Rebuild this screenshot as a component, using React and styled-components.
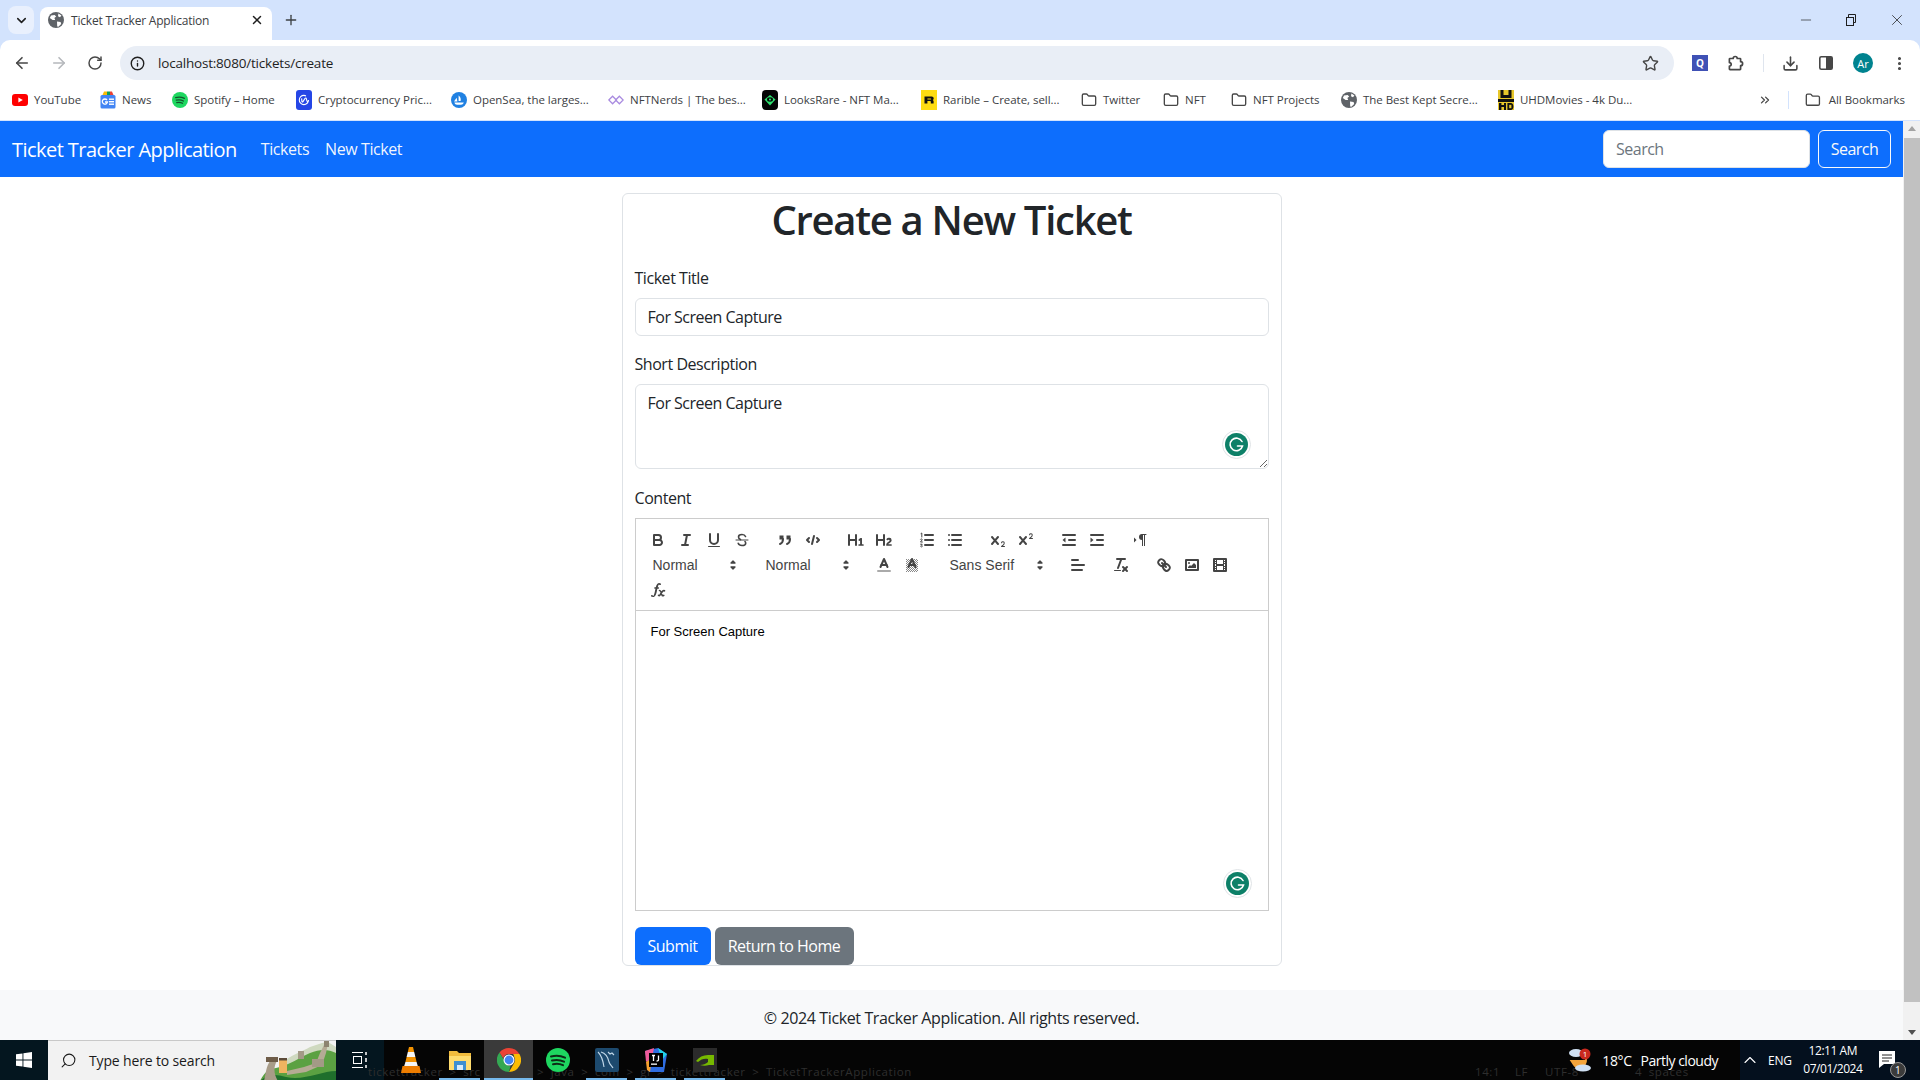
import styled, { createGlobalStyle } from 'styled-components'
import {
  ArrowLeft, ArrowRight, RotateCw, Star, Info, Download, MoreVertical,
  Plus, X, ChevronDown, ChevronUp, Folder, Minus, ChevronsRight, Search,
} from 'lucide-react'

const UI_FONT = '"Open Sans", "Liberation Sans", sans-serif'

const GlobalStyle = createGlobalStyle`
  * { box-sizing: border-box; }
  html, body { margin: 0; padding: 0; height: 100%; overflow: hidden; }
  body { font-family: ${UI_FONT}; color: #212529; background: #fff; }
`

/* ---------- small logos ---------- */

const YouTubeLogo = () => (
  <svg width="16" height="16" viewBox="0 0 16 16">
    <rect x="0" y="2" width="16" height="12" rx="3" fill="#f00" />
    <path d="M6.4 5.4 10.8 8 6.4 10.6Z" fill="#fff" />
  </svg>
)
const NewsLogo = () => (
  <svg width="16" height="20" viewBox="0 0 16 20">
    <path d="M2.500 5 4 1.500h3V5Z" fill="#fbbc04" />
    <path d="M7 5V1.500h3V5Z" fill="#0f9d58" />
    <path d="M10 1.500h2L13.500 5H10Z" fill="#ea4335" />
    <rect x="0.500" y="5" width="15" height="13.500" rx="1.500" fill="#4285f4" />
    <rect x="9" y="8.500" width="5" height="1.400" fill="#fff" />
    <rect x="9" y="11" width="5" height="1.400" fill="#fff" />
    <rect x="9" y="13.500" width="5" height="1.400" fill="#fff" />
    <path d="M7 10a2.600 2.600 0 1 0 .5 2H5" fill="none" stroke="#fff" strokeWidth="1.300" />
  </svg>
)
const SpotifyLogo = () => (
  <svg width="16" height="16" viewBox="0 0 16 16">
    <circle cx="8" cy="8" r="8" fill="#1ed760" />
    <path d="M3.600 5.600C6.400 4.800 9.800 5 12.400 6.400M4.200 8.200c2.400-.6 5.200-.4 7.200.9M4.700 10.600c2-.5 4.200-.3 5.900.7" fill="none" stroke="#14532d" strokeWidth="1.200" strokeLinecap="round" />
  </svg>
)
const CoinLogo = () => (
  <svg width="16" height="20" viewBox="0 0 16 20">
    <rect width="16" height="20" rx="3" fill="#2546e6" />
    <path d="M12.600 11.400c-.7.6-1.600.3-1.800-.7L10.300 8.600c-.1-.7-.8-.9-1.200-.3L7 11.600c-.4.5-1 .3-1.100-.3L5.600 8.400M12.500 10A4.600 4.600 0 1 1 8 5.400 4.600 4.600 0 0 1 10 5.900" fill="none" stroke="#fff" strokeWidth="1.100" />
  </svg>
)
const OpenSeaLogo = () => (
  <svg width="16" height="16" viewBox="0 0 16 16">
    <circle cx="8" cy="8" r="8" fill="#2081e2" />
    <path d="M3 9.600 5.600 5.800l.8 3.800ZM7.600 3.600c1.600 1.200 2.600 3 2 5.400H7.600ZM3.400 10.600h9.400c-.6 1.600-1.600 2.200-2.800 2.200H6c-1.200 0-2.200-.8-2.600-2.200Z" fill="#fff" />
  </svg>
)
const NerdsLogo = () => (
  <svg width="16" height="16" viewBox="0 0 16 16" fill="none" stroke="#a98be0" strokeWidth="1.300">
    <path d="M.8 8 4.600 4.200 8.400 8 4.600 11.800Z" />
    <path d="M7.600 8 11.400 4.200 15.200 8 11.400 11.800Z" />
  </svg>
)
const LooksRareLogo = () => (
  <svg width="16" height="20" viewBox="0 0 16 20">
    <rect width="16" height="20" rx="4" fill="#050505" />
    <path d="M8 15.500 2.500 9.500 8 5l5.500 4.500Z" fill="#2de370" />
    <ellipse cx="8" cy="9.500" rx="3" ry="2.200" fill="#050505" />
    <circle cx="8" cy="9.500" r="1.100" fill="#2de370" />
  </svg>
)
const RaribleLogo = () => (
  <svg width="16" height="20" viewBox="0 0 16 20">
    <rect width="16" height="20" fill="#fedc12" />
    <path d="M3.500 6.500h7.200c1.200 0 2 .8 2 2 0 .8-.4 1.300-1 1.600.6.2.9.7.9 1.300v2.100H9.800v-1.800c0-.4-.2-.6-.6-.6H6.400v2.400H3.500Zm2.900 2v1.100h3.200c.4 0 .6-.2.6-.55s-.2-.55-.6-.55Z" fill="#111" />
  </svg>
)
const GlobeLogo = () => (
  <svg width="16" height="16" viewBox="0 0 16 16">
    <circle cx="8" cy="8" r="8" fill="#5f6368" />
    <path d="M3 3.400 6.600 3l1.600 1.400L6.400 6 7.200 8H4.600L1.800 6ZM9 9.400l3.600.6.6 2-2.800 2.800-1.200-.4ZM10.400 1.400l3 2-1.400 1.800-2-1Z" fill="#fff" />
  </svg>
)
const UhdLogo = () => (
  <svg width="16" height="20" viewBox="0 0 16 20">
    <rect width="16" height="20" fill="#e7c72b" />
    <rect width="16" height="3" y="9" fill="#111" />
    <path d="M2.500 0h3v5h5V0h3v8h-11ZM1 13h2.400v2H6v-2h2v7H6v-3H3.400v3H1ZM9.400 13h3.400c1.600 0 2.600 1.400 2.600 3.500S14.400 20 12.800 20H9.400Z" fill="#111" />
    <rect x="11.200" y="14.800" width="2.200" height="3.400" fill="#e7c72b" />
  </svg>
)
const WindowsLogo = () => (
  <svg width="16" height="16" viewBox="0 0 16 16" fill="#fff">
    <path d="M0 2.300 6.500 1.400V7.500H0ZM7.400 1.300 16 0V7.500H7.400ZM0 8.400H6.500V14.600L0 13.700ZM7.400 8.400H16V16L7.400 14.700Z" />
  </svg>
)
const GrammarlyBadge = () => (
  <svg width="29" height="29" viewBox="0 0 29 29">
    <circle cx="14.500" cy="14.500" r="14" fill="#fff" stroke="#dfe3e6" />
    <circle cx="14.500" cy="14.500" r="11.500" fill="#0d8068" />
    <path d="M20 11.500A6.300 6.300 0 1 0 20.500 16H15.500" fill="none" stroke="#fff" strokeWidth="1.600" strokeLinecap="round" />
  </svg>
)

/* ---------- quill toolbar icons ---------- */

const QuillSvg = styled.svg.attrs({ viewBox: '0 0 18 18', width: 18, height: 18 })`
  fill: none;
  stroke: #444;
  stroke-width: 2;
  stroke-linecap: round;
  stroke-linejoin: round;
  .thin { stroke-width: 1; }
  .mid { stroke-width: 1.6; }
  .fill { fill: #444; stroke: none; }
`

const quillIcons = {
  bold: <><path d="M5,4H9.500A2.500,2.500,0,0,1,12,6.500v0A2.500,2.500,0,0,1,9.500,9H5V4Z" /><path d="M5,9h5.500A2.500,2.500,0,0,1,13,11.500v0A2.500,2.500,0,0,1,10.500,14H5V9Z" /></>,
  italic: <><line x1="7" x2="13" y1="4" y2="4" /><line x1="5" x2="11" y1="14" y2="14" /><line x1="8" x2="10" y1="14" y2="4" /></>,
  underline: <><path d="M5,3V9a4,4,0,0,0,4,4H9a4,4,0,0,0,4-4V3" /><rect className="fill" x="3" y="15" width="12" height="1" rx=".5" /></>,
  strike: <><line className="thin" x1="3" x2="15" y1="9" y2="9" /><path className="mid" d="M12.500 5.500C12 4.200 10.800 3.500 9 3.500 7 3.500 5.500 4.500 5.500 6c0 1.200.8 2.100 2 2.600M12 10.500c.5.500.7 1.100.7 1.700 0 1.400-1.600 2.300-3.700 2.300-2 0-3.300-.8-3.800-2.200" /></>,
  blockquote: <><rect className="fill" x="3.500" y="4.500" width="4" height="4" /><rect className="fill" x="10.500" y="4.500" width="4" height="4" /><path d="M7,8c0,4-3,5-3,5" /><path d="M14,8c0,4-3,5-3,5" /></>,
  code: <><polyline points="5 7 3 9 5 11" /><polyline points="13 7 15 9 13 11" /><line x1="10" x2="8" y1="5" y2="13" /></>,
  h1: <path className="fill" d="M10,4V14a1,1,0,0,1-2,0V10H3v4a1,1,0,0,1-2,0V4A1,1,0,0,1,3,4V8H8V4a1,1,0,0,1,2,0Zm6.068,9.209H14.990V7.599a.541.541,0,0,0-.605-.605h-.627a1.011,1.011,0,0,0-.748.297L11.645,8.566a.543.543,0,0,0-.022.858l.286.308a.539.539,0,0,0,.847.033l.099-.088a1.214,1.214,0,0,0,.242-.353h.022s-.011.309-.011.605V13.209H12.041a.541.541,0,0,0-.605.605v.439a.541.541,0,0,0,.605.605h4.027a.541.541,0,0,0,.605-.605v-.439A.541.541,0,0,0,16.068,13.209Z" />,
  h2: <path className="fill" d="M16.740,13.814v.439a.541.541,0,0,1-.605.605H11.855a.584.584,0,0,1-.649-.605V14.013c0-2.905,3.399-3.422,3.399-4.555a.777.777,0,0,0-.847-.781,1.177,1.177,0,0,0-.836.385c-.275.264-.561.374-.858.132l-.429-.341c-.308-.242-.385-.518-.154-.814a2.972,2.972,0,0,1,2.454-1.177,2.454,2.454,0,0,1,2.684,2.409c0,2.453-3.179,2.927-3.278,3.938h2.794A.541.541,0,0,1,16.740,13.814ZM9,3A1,1,0,0,0,8,4V8H3V4A1,1,0,0,0,1,4V14a1,1,0,0,0,2,0V10H8v4a1,1,0,0,0,2,0V4A1,1,0,0,0,9,3Z" />,
  ol: <><line x1="7" x2="15" y1="4" y2="4" /><line x1="7" x2="15" y1="9" y2="9" /><line x1="7" x2="15" y1="14" y2="14" /><path className="thin" d="M3 2.500 3.800 2V6M2.500 8.300C3 7.600 4.300 7.800 4.200 8.800 4.100 9.600 2.600 10.200 2.500 11H4.400M2.600 13.200H4.200L3.300 14.300C4.300 14.300 4.500 15 4.200 15.500 3.900 16 3 16 2.600 15.500" /></>,
  ul: <><line x1="6" x2="15" y1="4" y2="4" /><line x1="6" x2="15" y1="9" y2="9" /><line x1="6" x2="15" y1="14" y2="14" /><line x1="3" x2="3" y1="4" y2="4" /><line x1="3" x2="3" y1="9" y2="9" /><line x1="3" x2="3" y1="14" y2="14" /></>,
  sub: <><path className="fill" d="M15.500,15H13.861a3.858,3.858,0,0,0,1.914-2.975,1.805,1.805,0,0,0-1.600-1.751A1.921,1.921,0,0,0,12.021,11.700a.5.5,0,1,0,.957.291h0a.914.914,0,0,1,1.053-.725.81.81,0,0,1,.744.762c0,1.076-1.170,1.870-1.940,2.431A1.456,1.456,0,0,0,12,15.500a.5.5,0,0,0,.5.5h3A.5.5,0,0,0,15.500,15Z" /><path className="fill" d="M9.650,5.241a1,1,0,0,0-1.409.108L6,7.964,3.759,5.349A1,1,0,0,0,2.241,6.649L4.684,9.500,2.241,12.350A1,1,0,0,0,3.759,13.650L6,11.036,8.241,13.650a1,1,0,1,0,1.518-1.300L7.316,9.500,9.759,6.651A1,1,0,0,0,9.650,5.241Z" /></>,
  sup: <><path className="fill" d="M15.500,7H13.861a4.015,4.015,0,0,0,1.914-2.975,1.805,1.805,0,0,0-1.600-1.751A1.922,1.922,0,0,0,12.021,3.700a.5.5,0,1,0,.957.291.917.917,0,0,1,1.053-.725.81.81,0,0,1,.744.762c0,1.077-1.164,1.925-1.934,2.486A1.423,1.423,0,0,0,12,7.500a.5.5,0,0,0,.5.5h3A.5.5,0,0,0,15.500,7Z" /><path className="fill" d="M9.651,5.241a1,1,0,0,0-1.410.108L6,7.964,3.759,5.349a1,1,0,1,0-1.519,1.300L4.683,9.500,2.241,12.350a1,1,0,1,0,1.519,1.300L6,11.036l2.241,2.614a1,1,0,0,0,1.519-1.300L7.317,9.500,9.759,6.651A1,1,0,0,0,9.651,5.241Z" /></>,
  outdent: <><line x1="3" x2="15" y1="14" y2="14" /><line x1="3" x2="15" y1="4" y2="4" /><line x1="9" x2="15" y1="9" y2="9" /><polygon className="fill" points="5.500 6.500 5.500 11.500 2.500 9" /></>,
  indent: <><line x1="3" x2="15" y1="14" y2="14" /><line x1="3" x2="15" y1="4" y2="4" /><line x1="9" x2="15" y1="9" y2="9" /><polygon className="fill" points="2.500 6.500 2.500 11.500 5.500 9" /></>,
  direction: <><polygon className="fill" points="3 11.500 5.500 9 3 6.500" /><path className="fill" d="M11,3a3,3,0,0,0,0,6h1V3Z" /><line className="thin" x1="11" x2="15" y1="3.500" y2="3.500" /><rect className="fill" x="11" y="4" width="1" height="11" /><rect className="fill" x="13" y="4" width="1" height="11" /></>,
  color: <><line x1="3" x2="15" y1="15" y2="15" stroke="#aaa" /><polyline points="5.500 11 9 3 12.500 11" /><line x1="11.630" x2="6.380" y1="9" y2="9" /></>,
  background: <><pattern id="dither" width="2" height="2" patternUnits="userSpaceOnUse"><rect width="1" height="1" fill="#888" stroke="none" /><rect x="1" y="1" width="1" height="1" fill="#888" stroke="none" /></pattern><rect x="3" y="3" width="12" height="13" fill="url(#dither)" stroke="none" /><polyline points="5.500 11 9 3 12.500 11" /><line x1="11.630" x2="6.380" y1="9" y2="9" /></>,
  align: <><line x1="3" x2="15" y1="9" y2="9" /><line x1="3" x2="13" y1="14" y2="14" /><line x1="3" x2="9" y1="4" y2="4" /></>,
  clean: <><line x1="5" x2="13" y1="3" y2="3" /><line x1="6" x2="9.350" y1="12" y2="3" /><line x1="11" x2="15" y1="11" y2="15" /><line x1="15" x2="11" y1="11" y2="15" /><rect className="fill" x="2" y="14" width="7" height="1" rx=".5" /></>,
  link: <><line x1="7" x2="11" y1="7" y2="11" /><path d="M8.900,4.577a3.476,3.476,0,0,1,.36,4.679A3.476,3.476,0,0,1,4.577,8.900C3.185,7.500,2.035,6.400,4.217,4.217S7.500,3.185,8.900,4.577Z" /><path d="M13.423,9.100a3.476,3.476,0,0,0-4.679-.36,3.476,3.476,0,0,0,.36,4.679c1.392,1.392,2.500,2.542,4.679.36S14.815,10.500,13.423,9.100Z" /></>,
  image: <><rect x="3" y="4" width="12" height="10" /><circle className="fill" cx="6" cy="7" r="1" /><polygon className="fill" points="5 12 5 11 7 9 8 10 11 7 13 9 13 12" /></>,
  video: <><rect x="3" y="3" width="12" height="12" /><rect className="fill" x="5" y="3" width="1" height="12" /><rect className="fill" x="12" y="3" width="1" height="12" /><rect className="fill" x="5" y="8" width="8" height="2" /><rect className="fill" x="3" y="5" width="3" height="1" /><rect className="fill" x="3" y="7" width="3" height="1" /><rect className="fill" x="3" y="10" width="3" height="1" /><rect className="fill" x="3" y="12" width="3" height="1" /><rect className="fill" x="12" y="5" width="3" height="1" /><rect className="fill" x="12" y="7" width="3" height="1" /><rect className="fill" x="12" y="10" width="3" height="1" /><rect className="fill" x="12" y="12" width="3" height="1" /></>,
  formula: <><path className="fill" d="M11.759,2.482a2.561,2.561,0,0,0-3.530.607A7.656,7.656,0,0,0,6.800,6.200C6.109,9.188,5.275,14.677,4.150,14.927a1.545,1.545,0,0,0-1.300-.933A.922.922,0,0,0,2,15.036S1.954,16,4.119,16s3.091-2.691,3.700-5.553c.177-.826.36-1.726.554-2.600L8.775,6.200c.381-1.421.807-2.521,1.306-2.676a1.014,1.014,0,0,0,1.020.56A.966.966,0,0,0,11.759,2.482Z" /><rect className="fill" x="5.150" y="6.200" width="5" height="1.600" rx=".8" /><path className="mid" d="M10.500 9.500c1 0 1.300.6 1.700 2l.8 2.500c.3.900.9 1 1.800.4M15.500 9.800c-1-.6-1.800 0-2.700 1.400L11 14c-.5.700-1 .8-1.500.3" /></>,
}

const QuillIcon = ({ name }) => <QuillSvg>{quillIcons[name]}</QuillSvg>

const PickerArrows = () => (
  <QuillSvg>
    <polygon points="7 11 9 13 11 11" stroke="#444" strokeWidth="1.300" fill="#444" />
    <polygon points="7 7 9 5 11 7" stroke="#444" strokeWidth="1.300" fill="#444" />
  </QuillSvg>
)

/* ---------- browser chrome ---------- */

const Screen = styled.div`
  width: 1920px;
  height: 1080px;
  background: #d3e3fd;
  display: flex;
  flex-direction: column;
  overflow: hidden;
`
const TabStrip = styled.div`
  height: 40px;
  display: flex;
  align-items: flex-end;
  padding-left: 8px;
  flex: none;
`
const TabListButton = styled.div`
  width: 26px;
  height: 28px;
  margin-bottom: 6px;
  border-radius: 8px;
  background: #e9f0fd;
  color: #1f1f1f;
  display: flex;
  align-items: center;
  justify-content: center;
`
const ActiveTab = styled.div`
  width: 232px;
  height: 33px;
  margin-left: 6px;
  background: #fff;
  border-radius: 8px 8px 0 0;
  display: flex;
  align-items: center;
  padding: 0 8px 7px;
  gap: 7px;
`
const TabTitle = styled.span`
  flex: 1;
  font-size: 12px;
  color: #3c4043;
  letter-spacing: -0.2px;
`
const NewTab = styled.div`
  margin: 0 0 9px 11px;
  width: 16px;
  height: 22px;
  display: flex;
  align-items: center;
  color: #3c4043;
`
const WindowControls = styled.div`
  margin-left: auto;
  align-self: stretch;
  display: flex;
  align-items: center;
  gap: 29px;
  padding-right: 14px;
  color: #1f1f1f;
`
const RestoreIcon = () => (
  <svg width="16" height="16" viewBox="0 0 16 16" fill="none" stroke="#1f1f1f">
    <rect x="3.500" y="5.500" width="7" height="8" />
    <path d="M5.500 5.500v-3h7v8h-2" />
  </svg>
)

const Toolbar = styled.div`
  height: 41px;
  background: #fff;
  border-radius: 10px 10px 0 0;
  display: flex;
  align-items: flex-start;
  padding: 6px 0 0 13px;
  flex: none;
`
const NavIcons = styled.div`
  width: 107px;
  height: 34px;
  display: flex;
  align-items: center;
  gap: 19px;
  color: #474747;
  flex: none;
`
const AddressBar = styled.div`
  width: 1554px;
  height: 34px;
  flex: none;
  border-radius: 17px;
  background: #e9eef6;
  display: flex;
  align-items: center;
  padding: 0 0 0 10px;
  gap: 13px;
`
const Url = styled.span`
  flex: 1;
  font-size: 13.5px;
  color: #1f1f1f;
  letter-spacing: -0.2px;
`
const StarWrap = styled.div`
  display: flex;
  margin-right: 15px;
  color: #474747;
`
const ToolbarIcons = styled.div`
  display: flex;
  align-items: center;
  height: 34px;
  margin-left: 18px;
  color: #474747;
  flex: none;
`
const ExtensionBadge = styled.div`
  width: 16px;
  height: 16px;
  background: #3f51b5;
  color: #fff;
  font-size: 10px;
  font-weight: 700;
  display: flex;
  align-items: center;
  justify-content: center;
`
const ToolbarSlot = styled.div`
  width: ${p => p.$w}px;
  display: flex;
  justify-content: center;
`
const ToolbarDivider = styled.div`
  width: 1px;
  height: 18px;
  background: #dfe5ee;
  margin: 0 17px 0 1px;
`
const Avatar = styled.div`
  width: 20px;
  height: 20px;
  margin-right: 4px;
  border-radius: 50%;
  background: #00838f;
  color: #fff;
  font-size: 11px;
  display: flex;
  align-items: center;
  justify-content: center;
`
const PuzzleIcon = () => (
  <svg width="18" height="18" viewBox="0 0 18 18" fill="none" stroke="#474747" strokeWidth="1.700" strokeLinejoin="round">
    <path d="M4 4.500h3.200a2 2 0 1 1 4 0H14a.6.6 0 0 1 .6.6V7.700a2 2 0 1 1 0 4V15a.6.6 0 0 1-.6.6H4a.6.6 0 0 1-.6-.6V12.200a1.800 1.800 0 0 0 0-3.600V5.100A.6.6 0 0 1 4 4.500Z" />
  </svg>
)
const SidePanelIcon = () => (
  <svg width="16" height="16" viewBox="0 0 16 16">
    <rect x="1.800" y="1.800" width="12.400" height="12.400" rx="1.500" fill="none" stroke="#474747" strokeWidth="1.600" />
    <rect x="8" y="1.800" width="6.200" height="12.400" fill="#474747" />
  </svg>
)

const BookmarkBar = styled.div`
  height: 40px;
  background: #fff;
  border-bottom: 1px solid #d3e3fd;
  display: flex;
  align-items: center;
  padding: 0 0 2px 12px;
  flex: none;
`
const Bookmark = styled.div`
  display: flex;
  align-items: center;
  gap: ${p => (p.$last ? 8 : 6)}px;
  margin-right: ${p => (p.$last ? 0 : 12)}px;
  width: ${p => p.$w}px;
  flex: none;
`
const BookmarkLabel = styled.span`
  font-size: 11.5px;
  color: #3c4043;
  white-space: nowrap;
  letter-spacing: -0.03px;
`
const BookmarkEnd = styled.div`
  margin-left: auto;
  display: flex;
  align-items: center;
  padding-right: 15px;
  color: #474747;
`
const BookmarkDivider = styled.div`
  width: 1px;
  height: 18px;
  background: #d3e3fd;
  margin: 0 16px;
`

/* ---------- page ---------- */

const Viewport = styled.div`
  flex: 1;
  min-height: 0;
  display: flex;
`
const Page = styled.div`
  flex: 1;
  min-width: 0;
  background: #fff;
  display: flex;
  flex-direction: column;
`
const Navbar = styled.nav`
  height: 56px;
  background: #0d6efd;
  display: flex;
  align-items: center;
  padding: 0 12px;
  flex: none;
`
const Brand = styled.a`
  font-size: 20px;
  color: #fff;
  margin-right: 24px;
  letter-spacing: -0.55px;
`
const NavLink = styled.a`
  font-size: 16px;
  color: rgba(255, 255, 255, 0.95);
  margin-right: 16px;
  letter-spacing: -0.42px;
`
const NavSearch = styled.form`
  margin-left: auto;
  display: flex;
  gap: 8px;
`
const SearchInput = styled.input`
  width: 207px;
  height: 38px;
  border: 1px solid #dee2e6;
  border-radius: 6px;
  padding: 0 12px;
  font: 16px ${UI_FONT};
  letter-spacing: -0.5px;
  &::placeholder { color: #6c757d; opacity: 1; }
`
const OutlineButton = styled.button`
  width: 73px;
  height: 38px;
  border: 1px solid #f8f9fa;
  border-radius: 6px;
  background: transparent;
  color: #f8f9fa;
  font: 16px ${UI_FONT};
  letter-spacing: -0.5px;
  padding: 0;
`
const Main = styled.main`
  flex: 1;
  min-height: 0;
  padding-top: 16px;
  display: flex;
  justify-content: center;
`
const Card = styled.form`
  width: 660px;
  height: 773px;
  border: 1px solid #dee2e6;
  border-radius: 6px;
  padding: 0 12px;
`
const Heading = styled.h1`
  font-size: 40px;
  line-height: 48px;
  font-weight: 600;
  text-align: center;
  margin: 2px 0 22px;
  color: #212529;
  letter-spacing: -1.28px;
`
const Field = styled.div`
  margin-bottom: ${p => p.$mb || 16}px;
`
const Label = styled.label`
  display: block;
  font-size: 16px;
  line-height: 24px;
  margin-bottom: 8px;
  letter-spacing: -0.45px;
`
const TextInput = styled.input`
  display: block;
  width: 100%;
  height: 38px;
  border: 1px solid #dee2e6;
  border-radius: 6px;
  padding: 0 12px;
  font: 16px ${UI_FONT};
  letter-spacing: -0.5px;
  color: #212529;
`
const DescriptionBox = styled.div`
  position: relative;
  height: 85px;
`
const TextArea = styled.textarea`
  display: block;
  width: 100%;
  height: 85px;
  border: 1px solid #dee2e6;
  border-radius: 6px;
  padding: 6px 12px;
  font: 16px/24px ${UI_FONT};
  letter-spacing: -0.5px;
  color: #212529;
`
const BadgeSlot = styled.div`
  position: absolute;
  right: ${p => p.$right}px;
  bottom: ${p => p.$bottom}px;
  height: 29px;
`
const EditorToolbar = styled.div`
  border: 1px solid #ccc;
  padding: 8px;
  font-family: Helvetica, "Liberation Sans", Arial, sans-serif;
`
const ToolRow = styled.div`
  height: 25px;
  display: flex;
  align-items: center;
`
const ToolGroup = styled.span`
  display: flex;
  margin-right: 15px;
`
const ToolButton = styled.span`
  width: 28px;
  height: 24px;
  padding: 3px 5px;
  display: block;
`
const Picker = styled.span`
  width: ${p => p.$w}px;
  height: 24px;
  display: flex;
  align-items: center;
  justify-content: space-between;
  padding: 0 2px 0 9px;
  font-size: 14px;
  color: #444;
  svg { margin-right: -2px; }
`
const EditorBody = styled.div`
  position: relative;
  height: 300px;
  border: 1px solid #ccc;
  border-top: 0;
  padding: 12px 15px;
  font: 13px/1.42 Helvetica, "Liberation Sans", Arial, sans-serif;
  color: #000;
`
const Actions = styled.div`
  display: flex;
  gap: 4px;
`
const FormButton = styled.button`
  height: 38px;
  padding: 0;
  width: ${p => p.$w}px;
  border: 0;
  border-radius: 6px;
  background: ${p => p.$bg};
  color: #fff;
  font: 16px ${UI_FONT};
  letter-spacing: -0.5px;
`
const Footer = styled.footer`
  height: 50px;
  flex: none;
  background: #f8f9fa;
  text-align: center;
  font-size: 16px;
  line-height: 56px;
  color: #212529;
  letter-spacing: -0.38px;
`
const Scrollbar = styled.div`
  width: 17px;
  background: #f1f1f1;
  display: flex;
  flex-direction: column;
  align-items: center;
  justify-content: space-between;
  padding: 5px 0;
  position: relative;
`
const ScrollThumb = styled.div`
  position: absolute;
  left: 1px;
  right: 0;
  top: 17px;
  bottom: 38px;
  background: #c1c1c1;
`
const ScrollArrow = styled.div`
  width: 0;
  height: 0;
  border-left: 4px solid transparent;
  border-right: 4px solid transparent;
  ${p => (p.$down ? 'border-top: 5px solid #505050;' : 'border-bottom: 5px solid #a3a3a3;')}
`

/* ---------- taskbar ---------- */

const Taskbar = styled.div`
  position: relative;
  height: 40px;
  flex: none;
  background: #050505;
  display: flex;
  align-items: stretch;
  color: #fff;
`
const StartButton = styled.div`
  width: 48px;
  background: #04161f;
  display: flex;
  align-items: center;
  justify-content: center;
`
const SearchBox = styled.div`
  width: 288px;
  background: #f2f2f2;
  border-top: 1px solid #c8c8c8;
  display: flex;
  align-items: center;
  padding-left: 12px;
  gap: 12px;
  color: #1a1a1a;
  font-size: 14px;
  letter-spacing: -0.15px;
  overflow: hidden;
  position: relative;
`
const SearchGlass = styled(Search)`
  transform: scaleX(-1);
  flex: none;
`
const SearchArt = styled.svg`
  position: absolute;
  right: 0;
  top: 0;
`
const TaskView = styled.div`
  width: 48px;
  background: #04161f;
  display: flex;
  align-items: center;
  justify-content: center;
`
const TaskApp = styled.div`
  width: 49px;
  margin-left: ${p => p.$ml || 0}px;
  background: ${p => (p.$active ? '#3a3a3a' : 'transparent')};
  display: flex;
  align-items: center;
  justify-content: center;
  position: relative;
  &::after {
    content: '';
    display: ${p => (p.$running ? 'block' : 'none')};
    position: absolute;
    left: ${p => (p.$active ? 0 : 4)}px;
    right: ${p => (p.$active ? 0 : 4)}px;
    bottom: 0;
    height: 2px;
    background: #76b9ed;
  }
`
const Ghost = styled.span`
  position: absolute;
  top: 24px;
  left: ${p => p.$left}px;
  font-size: 11.5px;
  letter-spacing: 0.6px;
  word-spacing: 3px;
  color: #2e2e2e;
  white-space: nowrap;
`
const Tray = styled.div`
  margin-left: auto;
  display: flex;
  align-items: center;
  position: relative;
`
const Weather = styled.div`
  display: flex;
  align-items: center;
  font-size: 14px;
  gap: 9px;
  padding-right: 22px;
`
const WeatherTemp = styled.span`
  letter-spacing: -0.4px;
`
const WeatherText = styled.span`
  letter-spacing: -0.5px;
`
const TrayRight = styled.div`
  width: 180px;
  align-self: stretch;
  background: #04101e;
  display: flex;
  align-items: center;
  font-size: 12px;
`
const TrayLang = styled.span`
  margin-left: 8px;
  letter-spacing: -0.2px;
`
const Clock = styled.div`
  width: 62px;
  margin-left: 10px;
  text-align: center;
  line-height: 18px;
  font-size: 12px;
  letter-spacing: -0.45px;
  white-space: nowrap;
`
const NotifyWrap = styled.div`
  position: relative;
  width: 24px;
  height: 24px;
  margin-left: 12px;
`
const NotifyCount = styled.span`
  position: absolute;
  right: -6px;
  bottom: -6px;
  width: 16px;
  height: 16px;
  border-radius: 50%;
  background: #3b3b3b;
  border: 1px solid #999;
  font-size: 10px;
  line-height: 14px;
  text-align: center;
`

const bookmarks = [
  { label: 'YouTube', w: 76, icon: <YouTubeLogo /> },
  { label: 'News', w: 60, icon: <NewsLogo /> },
  { label: 'Spotify – Home', w: 112, icon: <SpotifyLogo /> },
  { label: 'Cryptocurrency Pric...', w: 143, icon: <CoinLogo /> },
  { label: 'OpenSea, the larges...', w: 145, icon: <OpenSeaLogo /> },
  { label: 'NFTNerds | The bes...', w: 142, icon: <NerdsLogo /> },
  { label: 'LooksRare - NFT Ma...', w: 147, icon: <LooksRareLogo /> },
  { label: 'Rarible – Create, sell...', w: 148, icon: <RaribleLogo /> },
  { label: 'Twitter', w: 70, icon: <Folder size={16} color="#474747" /> },
  { label: 'NFT', w: 56, icon: <Folder size={16} color="#474747" /> },
  { label: 'NFT Projects', w: 98, icon: <Folder size={16} color="#474747" /> },
  { label: 'The Best Kept Secre...', w: 145, icon: <GlobeLogo /> },
  { label: 'UHDMovies - 4k Du...', w: 142, icon: <UhdLogo /> },
]

const toolRows = [
  [['bold', 'italic', 'underline', 'strike'], ['blockquote', 'code'], ['h1', 'h2'], ['ol', 'ul'], ['sub', 'sup'], ['outdent', 'indent'], ['direction']],
  [{ picker: 'Normal', w: 98 }, { picker: 'Normal', w: 98 }, ['color', 'background'], { picker: 'Sans Serif', w: 108 }, ['align'], ['clean'], ['link', 'image', 'video']],
  [['formula']],
]

const ghostTexts = [
  { left: 368, text: 'tickettracker > src > main > java > com > gl > tickettracker > TicketTrackerApplication' },
  { left: 1475, text: '14:1' },
  { left: 1515, text: 'LF' },
  { left: 1545, text: 'UTF-8' },
  { left: 1635, text: '4 spaces' },
]

const App = () => {
  return (
    <Screen>
      <GlobalStyle />
      <TabStrip>
        <TabListButton><ChevronDown size={15} strokeWidth={2.5} /></TabListButton>
        <ActiveTab>
          <GlobeLogo />
          <TabTitle>Ticket Tracker Application</TabTitle>
          <X size={14} strokeWidth={2.5} color="#1f1f1f" />
        </ActiveTab>
        <NewTab><Plus size={16} strokeWidth={2} /></NewTab>
        <WindowControls>
          <Minus size={16} strokeWidth={1} />
          <RestoreIcon />
          <X size={18} strokeWidth={1} />
        </WindowControls>
      </TabStrip>

      <Toolbar>
        <NavIcons>
          <ArrowLeft size={18} strokeWidth={2.2} />
          <ArrowRight size={18} strokeWidth={2.2} color="#b5b8bc" />
          <RotateCw size={16} strokeWidth={2.2} />
        </NavIcons>
        <AddressBar>
          <Info size={15} strokeWidth={2.2} color="#1f1f1f" />
          <Url>localhost:8080/tickets/create</Url>
          <StarWrap><Star size={17} strokeWidth={2} /></StarWrap>
        </AddressBar>
        <ToolbarIcons>
          <ToolbarSlot $w={16}><ExtensionBadge>Q</ExtensionBadge></ToolbarSlot>
          <ToolbarSlot $w={54}><PuzzleIcon /></ToolbarSlot>
          <ToolbarDivider />
          <ToolbarSlot $w={18}><Download size={17} strokeWidth={2.2} /></ToolbarSlot>
          <ToolbarSlot $w={54}><SidePanelIcon /></ToolbarSlot>
          <Avatar>Ar</Avatar>
          <ToolbarSlot $w={44}><MoreVertical size={17} strokeWidth={2.4} /></ToolbarSlot>
        </ToolbarIcons>
      </Toolbar>

      <BookmarkBar>
        {bookmarks.map(b => (
          <Bookmark key={b.label} $w={b.w}>
            {b.icon}
            <BookmarkLabel>{b.label}</BookmarkLabel>
          </Bookmark>
        ))}
        <BookmarkEnd>
          <ChevronsRight size={14} strokeWidth={2.2} />
          <BookmarkDivider />
          <Bookmark $w={100} $last>
            <Folder size={16} color="#474747" />
            <BookmarkLabel>All Bookmarks</BookmarkLabel>
          </Bookmark>
        </BookmarkEnd>
      </BookmarkBar>

      <Viewport>
        <Page>
          <Navbar>
            <Brand>Ticket Tracker Application</Brand>
            <NavLink>Tickets</NavLink>
            <NavLink>New Ticket</NavLink>
            <NavSearch>
              <SearchInput placeholder="Search" />
              <OutlineButton type="button">Search</OutlineButton>
            </NavSearch>
          </Navbar>
          <Main>
            <Card>
              <Heading>Create a New Ticket</Heading>
              <Field>
                <Label>Ticket Title</Label>
                <TextInput defaultValue="For Screen Capture" />
              </Field>
              <Field $mb={17}>
                <Label>Short Description</Label>
                <DescriptionBox>
                  <TextArea defaultValue="For Screen Capture" />
                  <BadgeSlot $right={18} $bottom={10}><GrammarlyBadge /></BadgeSlot>
                </DescriptionBox>
              </Field>
              <Field>
                <Label>Content</Label>
                <EditorToolbar>
                  {toolRows.map((row, i) => (
                    <ToolRow key={i}>
                      {row.map((group, j) => group.picker ? (
                        <ToolGroup key={j}>
                          <Picker $w={group.w}>{group.picker}<PickerArrows /></Picker>
                        </ToolGroup>
                      ) : (
                        <ToolGroup key={j}>
                          {group.map(name => (
                            <ToolButton key={name}><QuillIcon name={name} /></ToolButton>
                          ))}
                        </ToolGroup>
                      ))}
                    </ToolRow>
                  ))}
                </EditorToolbar>
                <EditorBody>
                  For Screen Capture
                  <BadgeSlot $right={16} $bottom={12}><GrammarlyBadge /></BadgeSlot>
                </EditorBody>
              </Field>
              <Actions>
                <FormButton type="button" $w={76} $bg="#0d6efd">Submit</FormButton>
                <FormButton type="button" $w={139} $bg="#6c757d">Return to Home</FormButton>
              </Actions>
            </Card>
          </Main>
          <Footer>© 2024 Ticket Tracker Application. All rights reserved.</Footer>
        </Page>
        <Scrollbar>
          <ScrollArrow />
          <ScrollThumb />
          <ScrollArrow $down />
        </Scrollbar>
      </Viewport>

      <Taskbar>
        {ghostTexts.map(g => <Ghost key={g.left} $left={g.left}>{g.text}</Ghost>)}
        <StartButton><WindowsLogo /></StartButton>
        <SearchBox>
          <SearchGlass size={17} strokeWidth={1.5} />
          Type here to search
          <SearchArt width="76" height="40" viewBox="0 0 76 40">
            <path d="M22 22C30 14 44 10 50 6L62 2 68 1 76 6V40H22Z" fill="#cfd9c0" />
            <path d="M0 40C4 32 8 28 16 27 30 24 40 16 50 12 60 8 68 8 76 12V40Z" fill="#5ba142" />
            <path d="M0 40C6 34 14 32 26 36 44 40 62 30 76 30V40Z" fill="#1f6f2c" />
            <path d="M4 40C6 32 6 26 10 20H17C13 26 14 34 18 40Z" fill="#a89c88" />
            <rect x="6" y="16" width="12" height="5" fill="#6e5c48" />
            <rect x="19" y="19" width="8" height="13" fill="#f0b460" />
            <rect x="19" y="17" width="8" height="2.500" fill="#5c4a38" />
            <path d="M27 30 44 26 56 22 60 12 64 4 68 2 66 12 62 24 46 31 27 34Z" fill="#b5ab94" />
            <rect x="52" y="18" width="12" height="8" fill="#a39a86" />
            <rect x="38" y="10" width="6" height="8" fill="#a39a86" />
            <rect x="64" y="0" width="5" height="6" fill="#8d8470" />
          </SearchArt>
        </SearchBox>
        <TaskView>
          <svg width="16" height="18" viewBox="0 0 16 18" fill="none" stroke="#fff">
            <path d="M0 1.500h11M0 16.500h11" />
            <rect x="1.500" y="5.500" width="8" height="7" />
            <path d="M14 1v3M14 7v4M14 14v3" strokeWidth="1.500" />
          </svg>
        </TaskView>
        <TaskApp $ml={2}>
          <svg width="20" height="26" viewBox="0 0 20 26">
            <path d="M8 0h4l1.200 5H6.800Z" fill="#f39200" />
            <path d="M6.800 5h6.400l1.200 5H5.600Z" fill="#f5f5f5" />
            <path d="M5.600 10h8.800l1.200 5H4.400Z" fill="#f39200" />
            <path d="M4.400 15h11.200l1.200 4H3.200Z" fill="#f5f5f5" />
            <path d="M1.500 19h17l1.500 7H0Z" fill="#ee7d00" />
          </svg>
        </TaskApp>
        <TaskApp $running>
          <svg width="24" height="24" viewBox="0 0 24 24">
            <path d="M1 3h8l2 2h12v17H1Z" fill="#f2bc3d" />
            <rect x="1" y="8" width="22" height="14" fill="#ffdc6e" />
            <rect x="6" y="13" width="12" height="9" fill="#3d8fd1" />
            <rect x="9" y="17" width="6" height="5" fill="#d7ebf9" />
          </svg>
        </TaskApp>
        <TaskApp $active $running>
          <svg width="24" height="24" viewBox="0 0 24 24">
            <path d="M12 0a12 12 0 0 1 10.400 6H12a6 6 0 0 0-5.800 4.500L2.500 4.600A12 12 0 0 1 12 0Z" fill="#ea4335" />
            <path d="M22.400 6A12 12 0 0 1 12 24l5.200-9a6 6 0 0 0 0-6 6 6 0 0 0-1-3Z" fill="#fbbc04" />
            <path d="M2.500 4.600 7 12a6 6 0 0 0 6.500 5.800L12 24A12 12 0 0 1 2.500 4.600Z" fill="#34a853" />
            <circle cx="12" cy="12" r="5.500" fill="#fff" />
            <circle cx="12" cy="12" r="4.400" fill="#4285f4" />
          </svg>
        </TaskApp>
        <TaskApp>
          <svg width="24" height="24" viewBox="0 0 24 24">
            <circle cx="12" cy="12" r="12" fill="#1ed760" />
            <path d="M5 8.500c4.500-1.200 10-.8 14 1.200M6 12.500c4-1 8.500-.6 12 1.200M7 16.200c3.400-.8 7-.5 10 1" fill="none" stroke="#0d2b16" strokeWidth="2" strokeLinecap="round" />
          </svg>
        </TaskApp>
        <TaskApp $running>
          <svg width="24" height="24" viewBox="0 0 24 24">
            <rect width="24" height="24" rx="2" fill="#1d4a6e" />
            <path d="M3 4c2 2 5 8 6 15M6 4c4 1 7 5 8 10 1 3 3 4 4 6M13 4l2 2 2-1 2 2" fill="none" stroke="#c3d9ea" strokeWidth="1.100" />
          </svg>
        </TaskApp>
        <TaskApp $running>
          <svg width="24" height="24" viewBox="0 0 24 24">
            <path d="M1 3 14 0l9 6-3 18-15 0Z" fill="#2f6de0" />
            <path d="M1 3 10 0 8 10 2 14Z" fill="#f05a9b" />
            <path d="M14 0l9 6-5 6Z" fill="#21d2e6" />
            <path d="M2 14 8 10 6 24 3 22Z" fill="#f59f2e" />
            <rect x="5" y="5" width="14" height="14" fill="#000" />
            <rect x="7" y="15.500" width="6" height="1.300" fill="#fff" />
            <path d="M8 7.500h3M9.500 7.500v5.500M14.500 7.500v4.500a1.500 1.500 0 0 1-2 .8" stroke="#fff" strokeWidth="1.300" fill="none" />
          </svg>
        </TaskApp>
        <TaskApp $running>
          <svg width="24" height="24" viewBox="0 0 24 24">
            <rect width="24" height="24" fill="#2b2b2b" />
            <path d="M3 13c3-4 7-6 12-6h6v10h-5c-3 1-6 1-9 0 3 0 6-1 8-3v-3c-3-1-7 0-10 3Z" fill="#76b900" />
          </svg>
        </TaskApp>

        <Tray>
          <Weather>
            <svg width="26" height="26" viewBox="0 0 26 26">
              <ellipse cx="9" cy="6" rx="7" ry="4" fill="#cfe0f3" />
              <path d="M2 12h18a9 9 0 0 1-6 9 7 7 0 0 1-8-3Z" fill="#f3a43b" />
              <rect x="2" y="10" width="16" height="3" fill="#050505" />
              <ellipse cx="16" cy="21" rx="8" ry="3.500" fill="#cfe0f3" />
              <circle cx="18" cy="7" r="5.500" fill="#c9291e" />
              <text x="18" y="10" fontSize="8" fill="#fff" textAnchor="middle" fontFamily="Open Sans">1</text>
            </svg>
            <WeatherTemp>18°C</WeatherTemp>
            <WeatherText>Partly cloudy</WeatherText>
          </Weather>
          <TrayRight>
            <ChevronUp size={20} strokeWidth={1.3} />
            <TrayLang>ENG</TrayLang>
            <Clock>12:11 AM<br />07/01/2024</Clock>
            <NotifyWrap>
              <svg width="24" height="24" viewBox="0 0 24 24">
                <path d="M3 3h16v13H8l-5 4Z" fill="#fff" />
                <path d="M6 7h10M6 10h10M6 13h7" stroke="#222" />
              </svg>
              <NotifyCount>1</NotifyCount>
            </NotifyWrap>
          </TrayRight>
        </Tray>
      </Taskbar>
    </Screen>
  )
}

export default App
